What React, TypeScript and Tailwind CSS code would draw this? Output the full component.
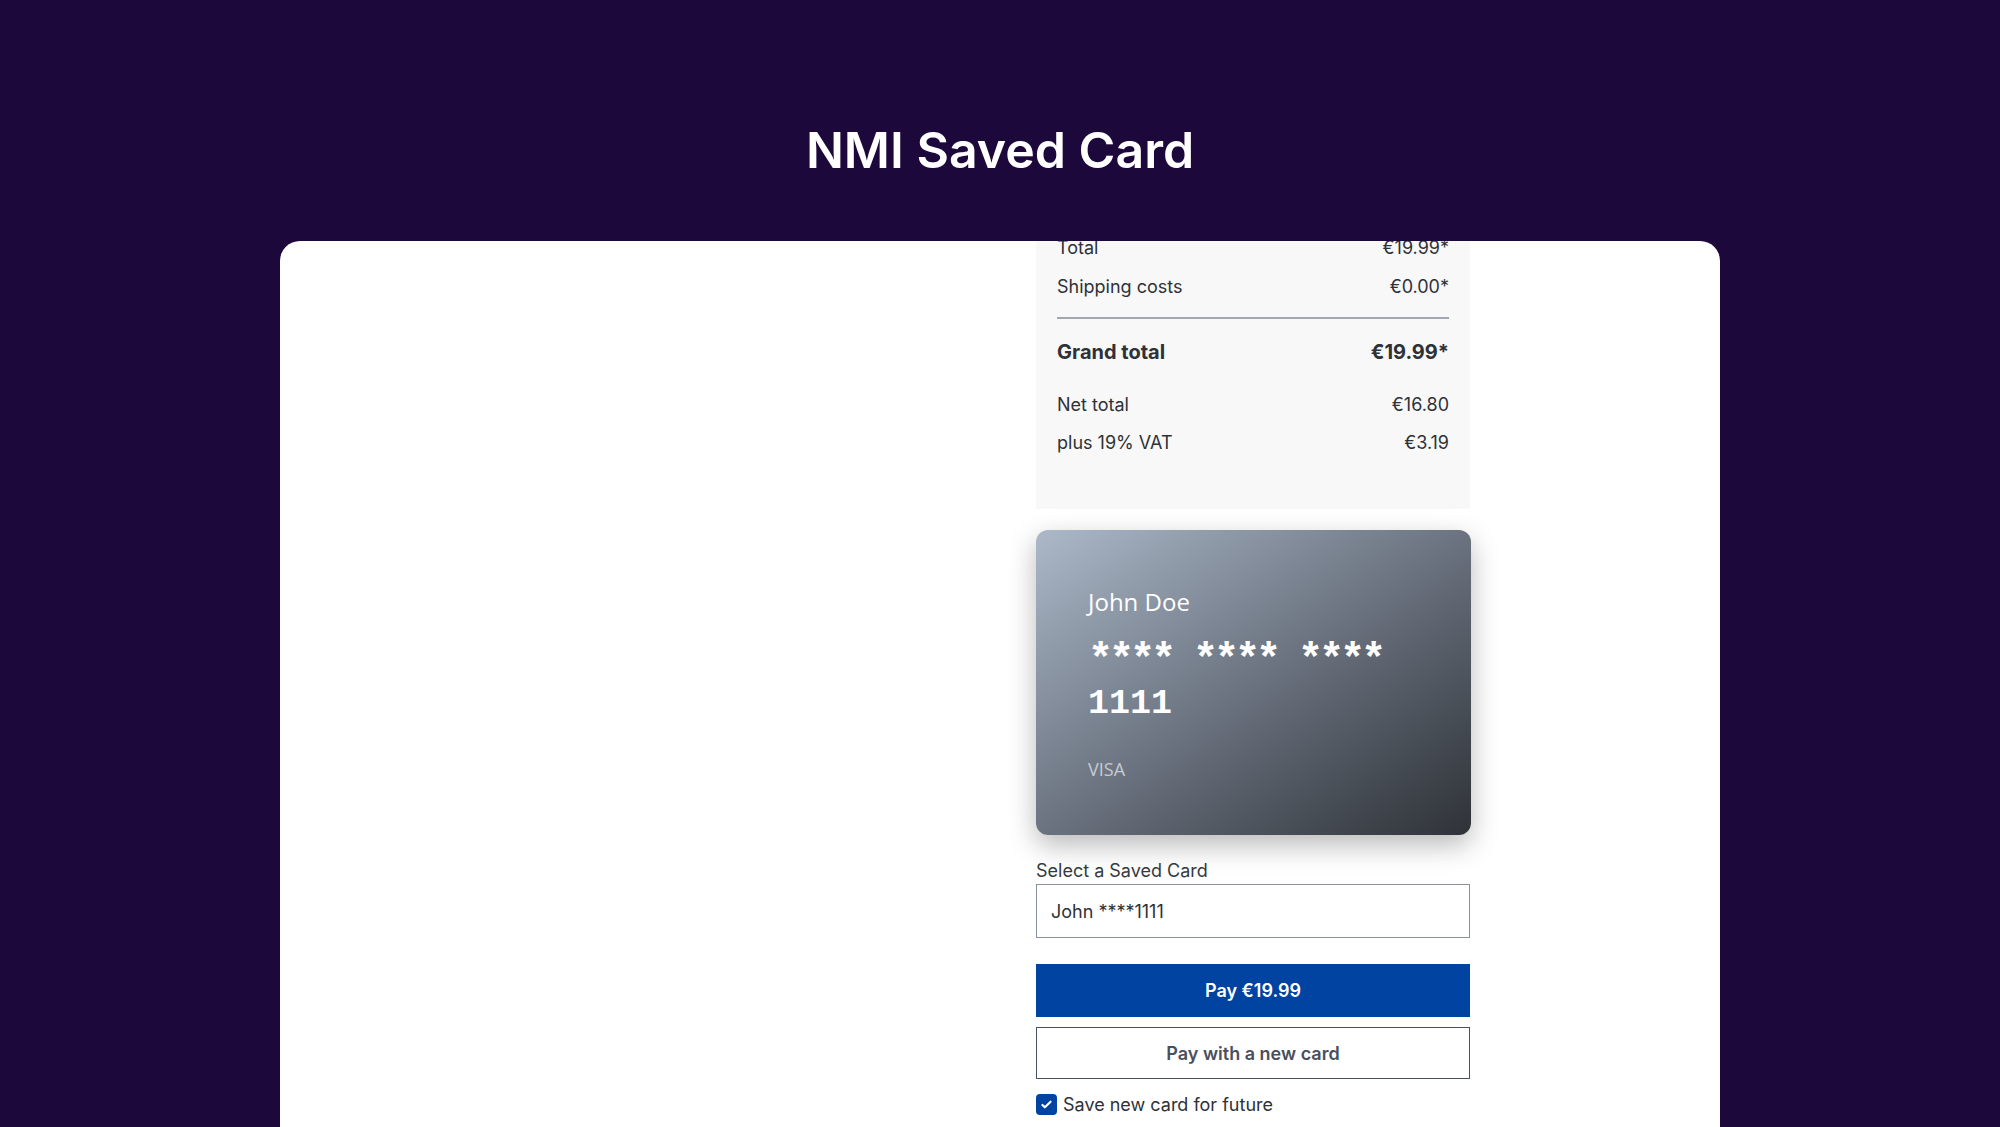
import React from "react";

const Row = ({ label, value, className = "" }: { label: string; value: string; className?: string }) => (
  <div className={`flex h-[39px] items-center justify-between ${className}`}>
    <span>{label}</span>
    <span>{value}</span>
  </div>
);

export default function App() {
  return (
    <div
      className="min-h-screen w-full bg-[#1d083c] overflow-hidden"
      style={{ fontFamily: "Inter, 'Noto Sans', sans-serif" }}
    >
      <h1 className="pt-[120px] text-center text-[50px] leading-[60px] font-semibold text-white">
        NMI Saved Card
      </h1>
      <div className="mx-auto mt-[61px] h-[1000px] w-[1440px] overflow-hidden rounded-t-[20px] bg-white">
        <div className="ml-[756px] w-[434px]">
          <div className="-mt-[13px] bg-[#f8f8f8] px-[21px] pb-[47px] text-[18px] text-[#2e3237]">
            <Row label="Total" value="€19.99*" />
            <Row label="Shipping costs" value="€0.00*" />
            <div className="mt-[11px] h-[2px] bg-[#a3a8b0]" />
            <Row label="Grand total" value="€19.99*" className="mt-[13px] text-[20px] font-bold" />
            <Row label="Net total" value="€16.80" className="mt-[14px]" />
            <Row label="plus 19% VAT" value="€3.19" className="-mt-px" />
          </div>

          <div className="mt-[21px] h-[305px] w-[435px] rounded-[12px] bg-gradient-to-br from-[#acb9c9] via-[#6b7380] to-[#2f3338] pl-[52px] pt-[57px] shadow-[0_10px_28px_rgba(0,0,0,0.28)]">
            <div
              className="text-[24px] leading-[30px] text-white"
              style={{ fontFamily: "'Open Sans', sans-serif" }}
            >
              John Doe
            </div>
            <div
              className="mt-[7px] w-[310px] text-[35px] font-bold leading-[52px] text-white"
              style={{ fontFamily: "'Liberation Mono', monospace" }}
            >
              <span className="relative top-[11px] text-[42px] tracking-[-4.2px]">**** **** ****</span>{" "}
              1111
            </div>
            <div
              className="mt-[27px] text-[18px] leading-[24px] text-[#c6cbd1]"
              style={{ fontFamily: "'Open Sans', sans-serif" }}
            >
              VISA
            </div>
          </div>

          <div className="mt-[24px] text-[18px] leading-[24px] text-[#353a40]">Select a Saved Card</div>
          <div className="mt-px flex h-[54px] items-center border border-[#8793a0] pl-[14px] text-[18px] text-[#2e3237]">
            John ****1111
          </div>
          <button className="mt-[26px] flex h-[53px] w-full items-center justify-center bg-[#0043a0] text-[18px] font-semibold text-white">
            Pay €19.99
          </button>
          <button className="mt-[10px] flex h-[52px] w-full items-center justify-center border-[1.5px] border-[#4b4f68] bg-white text-[18px] font-semibold text-[#4a4f5c]">
            Pay with a new card
          </button>
          <div className="mt-[12px] flex items-center gap-[6px] text-[18px] text-[#2e3237]">
            <span className="flex h-[21px] w-[21px] items-center justify-center rounded-[4px] bg-[#0043a0]">
              <svg width="13" height="13" viewBox="0 0 16 16" fill="none">
                <path d="M3 8.5l3 3 7-7" stroke="white" strokeWidth="2.6" strokeLinecap="round" strokeLinejoin="round" />
              </svg>
            </span>
            <span>Save new card for future</span>
          </div>
        </div>
      </div>
    </div>
  );
}
